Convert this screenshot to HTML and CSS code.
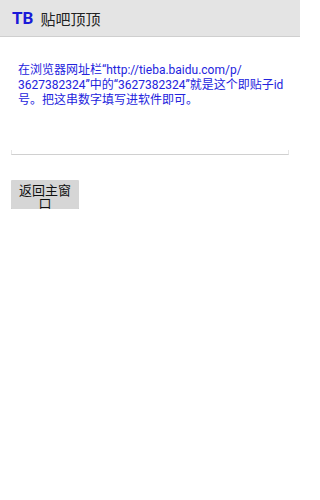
FILE: index.html
```html
<!DOCTYPE html>
<html lang="zh">
<head>
<meta charset="utf-8">
<link rel="stylesheet" href="styles.css">
</head>
<body>
<div class="screen">
<header class="titlebar">
  <span class="logo">TB</span>
  <span class="title">贴吧顶顶</span>
</header>
<main class="content">
  <p class="hint">在浏览器网址栏“http://tieba.baidu.com/p/<wbr>3627382324”中的“3627382324”就是这个即贴子id号。把这串数字填写进软件即可。</p>
  <div class="field"></div>
  <button class="btn">返回主窗口</button>
</main>
</div>
</body>
</html>
```
FILE: styles.css
```css
html, body {
  margin: 0;
  padding: 0;
  background: #ffffff;
  font-family: Roboto, "Noto Sans CJK SC", sans-serif;
}
.screen {
  width: 300px;
}
.titlebar {
  height: 37px;
  box-sizing: border-box;
  background: #e4e4e4;
  border-bottom: 1px solid #cfcfcf;
  display: flex;
  align-items: center;
  padding-left: 12px;
  gap: 7px;
}
.logo {
  color: #1a1ad8;
  font-weight: bold;
  font-size: 17px;
  font-family: Roboto, sans-serif;
}
.title {
  color: #222222;
  font-size: 15px;
}
.content {
  padding: 0 11px;
}
.hint {
  margin: 26px 0 0 7px;
  color: #2323dd;
  font-size: 12px;
  line-height: 15px;
}
.field {
  margin-top: 42px;
  height: 4px;
  border-bottom: 1px solid #d0d0d0;
  border-left: 1px solid #e6e6e6;
  border-right: 1px solid #e6e6e6;
}
.btn {
  margin-top: 25px;
  width: 68px;
  height: 29px;
  padding: 2px 4px 0;
  border: none;
  border-radius: 1px;
  background: #d6d6d6;
  box-shadow: 0 1px 0 #bdbdbd;
  color: #111111;
  font-family: "Noto Sans CJK SC", sans-serif;
  font-size: 13px;
  line-height: 13px;
  display: block;
}
```
